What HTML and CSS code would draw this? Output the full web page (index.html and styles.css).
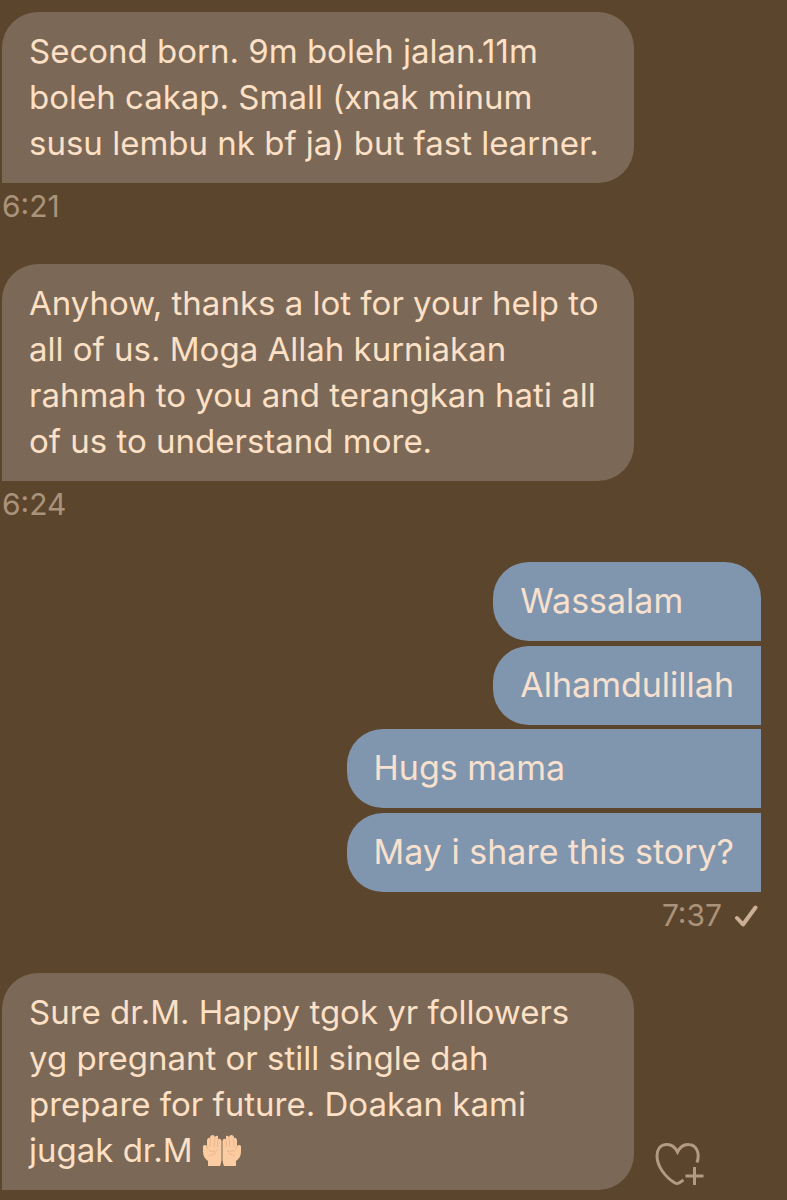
FILE: index.html
```html
<!DOCTYPE html>
<html lang="ms">
<head>
<meta charset="utf-8">
<meta name="viewport" content="width=device-width, initial-scale=1">
<title>Messages</title>
<link rel="stylesheet" href="styles.css">
</head>
<body>
<main class="chat">
  <section class="turn">
    <p class="bubble received">Second born. 9m boleh jalan.11m<br>boleh cakap. Small (xnak minum<br>susu lembu nk bf ja) but fast learner.</p>
    <time class="time">6:21</time>
  </section>
  <section class="turn">
    <p class="bubble received">Anyhow, thanks a lot for your help to<br>all of us. Moga Allah kurniakan<br>rahmah to you and terangkan hati all<br>of us to understand more.</p>
    <time class="time">6:24</time>
  </section>
  <section class="turn own">
    <div class="stack">
      <p class="bubble sent first">Wassalam</p>
      <p class="bubble sent">Alhamdulillah</p>
    </div>
    <div class="stack">
      <p class="bubble sent">Hugs mama</p>
      <p class="bubble sent">May i share this story?</p>
    </div>
    <div class="status">
      <time class="time">7:37</time>
      <svg class="check" viewBox="0 0 24 24" role="img" aria-label="Sent"><path d="M3 15L9 21.500L21.500 4.500"/></svg>
    </div>
  </section>
  <section class="turn reactable">
    <p class="bubble received">Sure dr.M. Happy tgok yr followers<br>yg pregnant or still single dah<br>prepare for future. Doakan kami<br>jugak dr.M <svg class="hands" viewBox="0 0 40 34" role="img" aria-label="Palms up together"><g><path class="skin" d="M6 32V27C3 25 1 22 1 18V12Q3 10 5 12L5 6Q6 3 8 4Q8 1 11 1Q12 1 13 3Q14 1 16 2V5Q19 4 19.500 7V26Q19 30 18 32Z"/><path class="crease" d="M8.500 4L8 13M13 3L12 13M16 5L15.500 13M5 12Q6 19 13 17M7 22Q13 21 15 16"/></g><g transform="matrix(-1 0 0 1 40 0)"><path class="skin" d="M6 32V27C3 25 1 22 1 18V12Q3 10 5 12L5 6Q6 3 8 4Q8 1 11 1Q12 1 13 3Q14 1 16 2V5Q19 4 19.500 7V26Q19 30 18 32Z"/><path class="crease" d="M8.500 4L8 13M13 3L12 13M16 5L15.500 13M5 12Q6 19 13 17M7 22Q13 21 15 16"/></g></svg></p>
    <button class="react" type="button" aria-label="Add reaction">
      <svg viewBox="0 0 50 44"><path d="M42 20.500C45 12 42 3 34 2.500C29 2 25 5 22.500 10C20 5 16 2 11 2.500C5 3 2 8 2 14C2 24 10 35 20 41Q22 42 24 41L28.500 38"/><path d="M39.500 25V43M30.500 34H48.500"/></svg>
    </button>
  </section>
</main>
</body>
</html>
```
FILE: styles.css
```css
* {
  box-sizing: border-box;
}

body {
  margin: 0;
  background: #5c452d;
  color: #fde0c5;
  font-family: Inter, "Liberation Sans", sans-serif;
  font-size: 33px;
  line-height: 46px;
}

.chat {
  display: flex;
  flex-direction: column;
  gap: 35px;
  padding: 12px 26px 10px 2px;
}

.turn {
  display: flex;
  flex-direction: column;
  align-items: flex-start;
}

.own {
  align-items: flex-end;
  gap: 4px;
}

.stack {
  display: grid;
  gap: 5px;
}

.bubble {
  margin: 0;
  padding: 16px 27px 17px;
}

.received {
  width: 632px;
  max-width: 84%;
  background: #7b6856;
  border-radius: 36px 36px 36px 0;
}

.sent {
  background: #8096ae;
  color: #f8e0cf;
  border-radius: 36px 0 0 36px;
  font-size: 34px;
}

.sent.first {
  border-top-right-radius: 36px;
}

.time {
  color: #ab937b;
  font-size: 30px;
}

.status {
  display: flex;
  align-items: center;
  gap: 12px;
  margin-top: -4px;
  padding-right: 3px;
}

.check {
  width: 24px;
  height: 24px;
  fill: none;
  stroke: #ccb095;
  stroke-width: 4;
  stroke-linecap: round;
  stroke-linejoin: round;
}

.reactable {
  flex-direction: row;
  align-items: flex-end;
  gap: 21px;
}

.hands {
  width: 40px;
  height: 34px;
  vertical-align: -6px;
}

.skin {
  fill: #fbcba1;
}

.crease {
  fill: none;
  stroke: #eeb68c;
  stroke-width: 1;
}

.react {
  display: flex;
  padding: 0 0 4px;
  border: 0;
  background: none;
  cursor: pointer;
}

.react svg {
  width: 50px;
  height: 44px;
  fill: none;
  stroke: #b39a82;
  stroke-width: 3;
}
```
